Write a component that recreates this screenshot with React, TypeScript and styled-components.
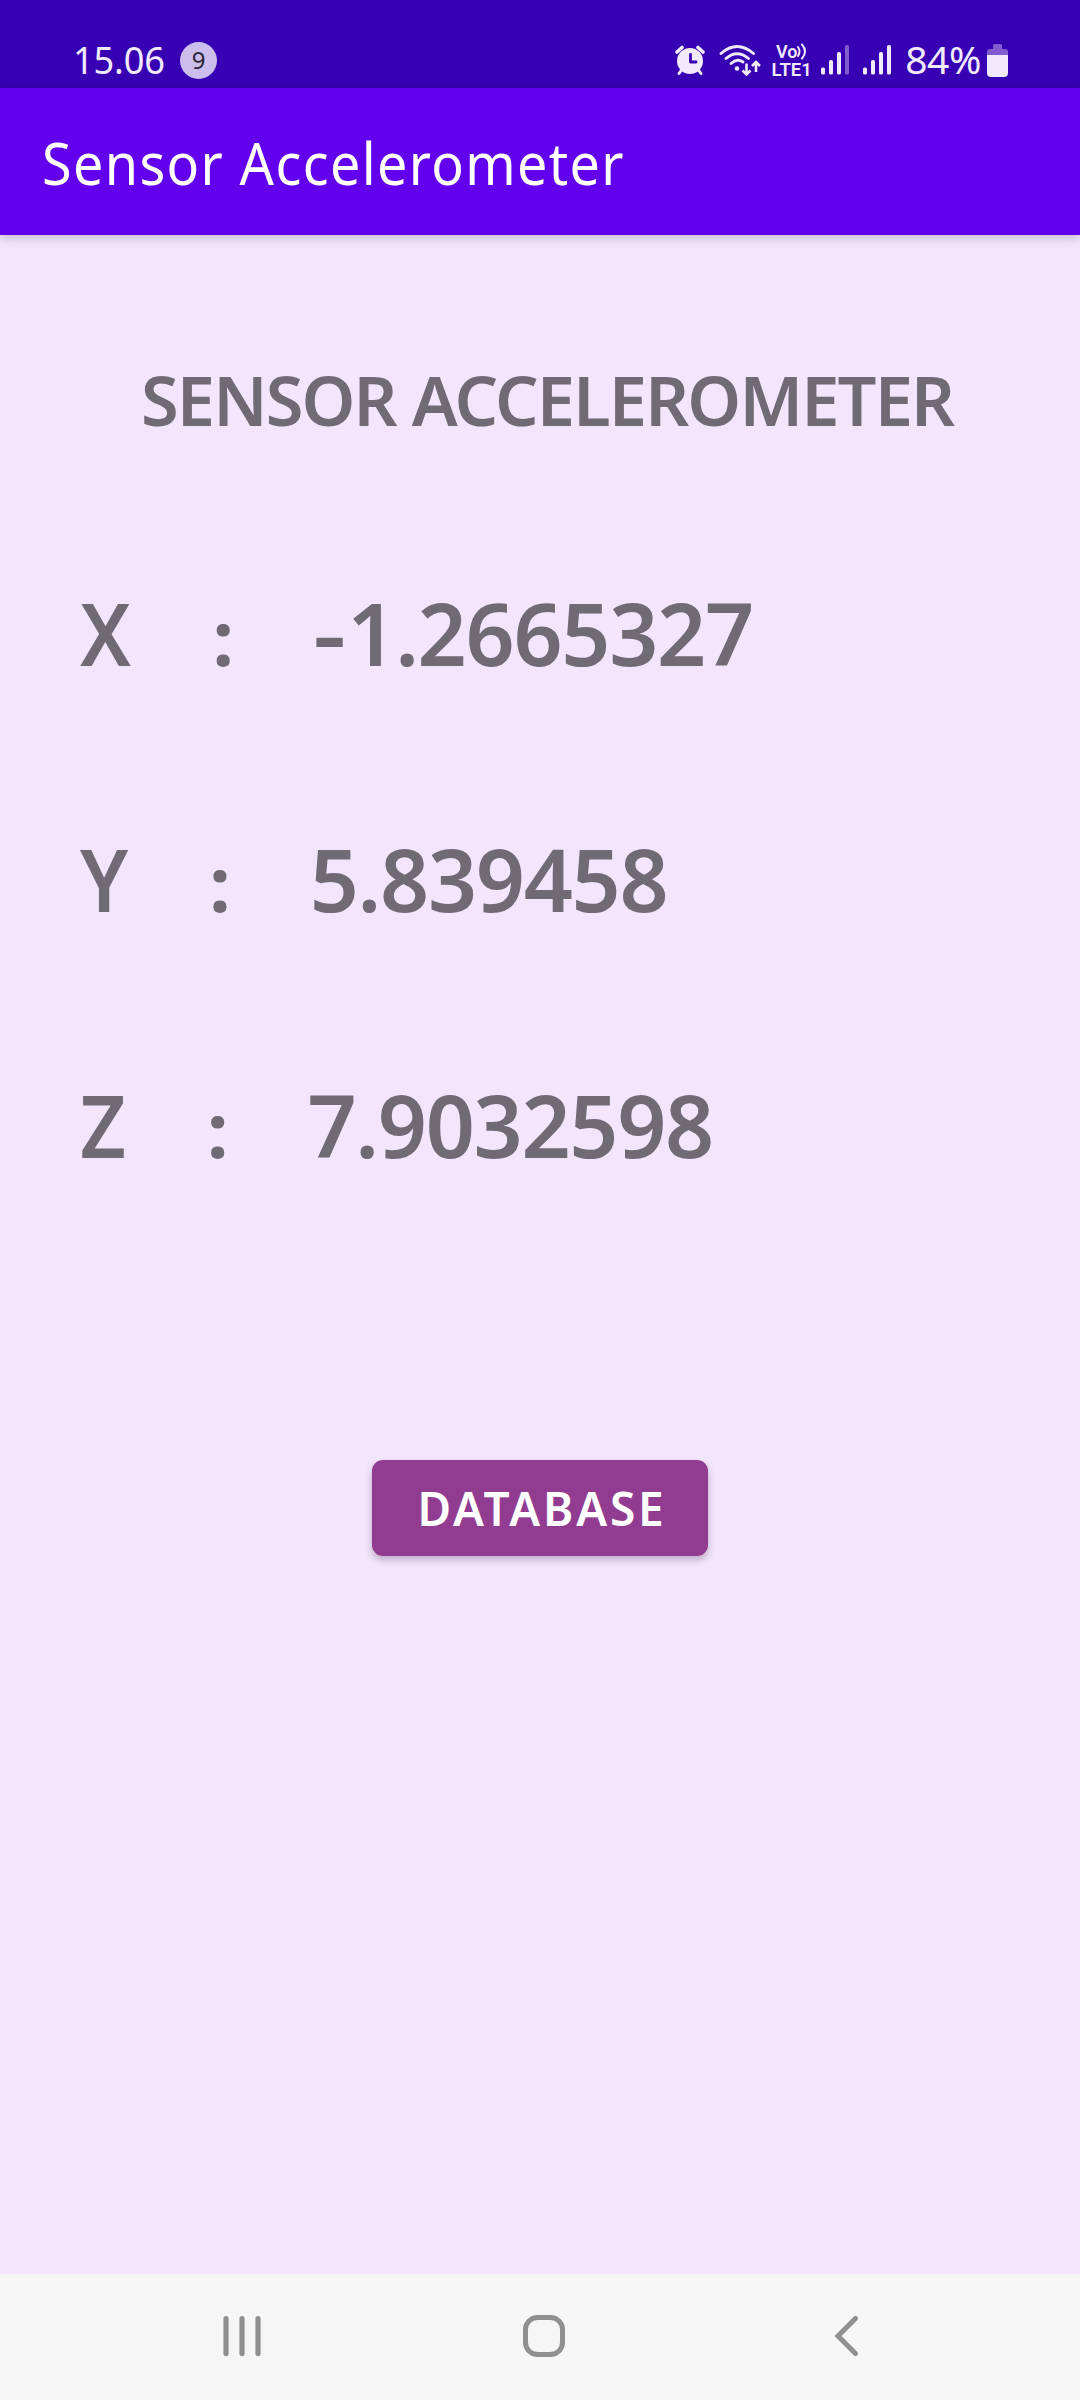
import React from "react";
import styled, { createGlobalStyle } from "styled-components";

const GlobalStyle = createGlobalStyle`
  * { box-sizing: border-box; }
  body { margin: 0; }
`;

const Screen = styled.div`
  display: flex;
  flex-direction: column;
  width: 1080px;
  height: 2400px;
  background: #f2e5fc;
  font-family: "Noto Sans", "Open Sans", sans-serif;
  overflow: hidden;
`;

const StatusBar = styled.header`
  display: flex;
  flex: none;
  justify-content: space-between;
  height: 88px;
  padding: 34px 72px 0 73px;
  background: #3700b3;
  color: #f1e9fc;
`;

const StatusGroup = styled.div`
  display: flex;
  align-items: center;
  height: 52px;
`;

const StatusText = styled.span<{ $spacing: number; $after?: number; $stretch?: number }>`
  margin-right: ${(p) => p.$after ?? 0}px;
  font-size: 39px;
  line-height: 50px;
  letter-spacing: ${(p) => p.$spacing}px;
  font-weight: 400;
  white-space: nowrap;
  transform: translateY(-1px) scaleX(${(p) => p.$stretch ?? 1});
  transform-origin: left center;
`;

const Badge = styled.span`
  display: flex;
  align-items: center;
  justify-content: center;
  width: 37px;
  height: 37px;
  margin-left: 8.5px;
  border-radius: 50%;
  background: #cbbeec;
  color: #2b2536;
  font-size: 24px;
  line-height: 36px;
`;

const Glyph = styled.svg<{ $after?: number }>`
  display: block;
  flex: none;
  margin-right: ${(p) => p.$after ?? 0}px;
`;

const Volte = styled.div`
  display: flex;
  flex-direction: column;
  align-items: center;
  width: 40px;
  height: 34px;
  margin-right: 9.5px;
  font-family: Roboto, sans-serif;
  font-weight: 600;
`;

const VolteTop = styled.div`
  display: flex;
  align-items: center;
  height: 17px;
  font-size: 18px;
  line-height: 17px;
`;

const VolteBottom = styled.div`
  height: 17px;
  font-size: 18.5px;
  line-height: 20px;
`;

const AppBar = styled.div`
  display: flex;
  flex: none;
  align-items: center;
  height: 146.5px;
  padding: 3px 0 0 42px;
  background: #6200ee;
  box-shadow: 0 3px 10px rgba(0, 0, 0, 0.18);
`;

const AppTitle = styled.h1`
  margin: 0;
  color: #fff;
  font-size: 58px;
  line-height: 80px;
  font-weight: 400;
  letter-spacing: 1.45px;
  white-space: nowrap;
  transform: scaleX(0.93);
  transform-origin: left center;
`;

const Content = styled.main`
  display: flex;
  flex: 1;
  flex-direction: column;
  padding-top: 115px;
`;

const Heading = styled.h2`
  margin: 0 0 123px;
  padding-left: 141px;
  color: #706a75;
  font-size: 68.5px;
  line-height: 100px;
  font-weight: 600;
  letter-spacing: -1.85px;
  white-space: nowrap;
`;

const Readings = styled.div`
  display: flex;
  flex-direction: column;
  gap: 126px;
`;

const Reading = styled.div`
  display: flex;
  align-items: baseline;
  height: 120px;
  padding-left: 80px;
  color: #706a75;
  font-size: 86px;
  line-height: 120px;
  font-weight: 600;
  white-space: nowrap;
`;

const Axis = styled.span`
  letter-spacing: -3px;
  transform: scaleX(0.93);
  transform-origin: left center;
`;

const Colon = styled.span`
  margin: 0 79px 0 80.5px;
  font-size: 76px;
  font-weight: 700;
`;

const Sign = styled.span`
  margin-right: 7px;
  transform: scaleX(1.2);
  transform-origin: left center;
`;

const Value = styled.span`
  letter-spacing: -1.3px;
`;

const DatabaseButton = styled.button`
  align-self: center;
  width: 336px;
  height: 96px;
  margin-top: 275px;
  padding: 0 0 0 4px;
  border: 0;
  border-radius: 11px;
  background: #923c91;
  box-shadow: 0 4px 7px rgba(60, 30, 80, 0.28);
  color: #fff;
  font-family: inherit;
  font-size: 46px;
  line-height: 92px;
  font-weight: 600;
  letter-spacing: 2.8px;
  white-space: nowrap;
`;

const NavBar = styled.nav`
  display: flex;
  flex: none;
  align-items: center;
  justify-content: space-between;
  height: 126px;
  padding: 0 212px 2px 220px;
  background: #f6f6f6;
`;

const AlarmIcon = () => (
  <Glyph width="30" height="34" viewBox="0 0 30 34" $after={14}>
    <circle cx="15" cy="18" r="13" fill="currentColor" />
    <path d="M2 9L7 4.5M28 9L23 4.5" stroke="currentColor" strokeWidth="3.6" strokeLinecap="round" />
    <path d="M6.5 27L4 30.5M23.5 27L26 30.5" stroke="currentColor" strokeWidth="3" strokeLinecap="round" />
    <path d="M15.5 11.5V19H21" fill="none" stroke="#3700b3" strokeWidth="2.8" strokeLinecap="round" strokeLinejoin="round" />
  </Glyph>
);

const WifiIcon = () => (
  <Glyph width="42" height="34" viewBox="0 0 42 34" $after={11}>
    <g fill="none" stroke="currentColor" strokeWidth="2.9" strokeLinecap="round">
      <path d="M2 10.5Q18 -3.5 34.5 10.5" />
      <path d="M7 15.5Q18 6 29.5 15.5" />
      <path d="M12 20.5Q18 15 24 19" />
    </g>
    <circle cx="18" cy="25.5" r="2.3" fill="currentColor" />
    <path d="M27.5 20.5V31M23.5 27.5L27.5 31.5L31.5 27.5M37 29V19.5M33 23L37 19L41 23" fill="none" stroke="currentColor" strokeWidth="2.6" />
  </Glyph>
);

const SignalIcon = ({ weak, after }: { weak?: boolean; after: number }) => (
  <Glyph width="28" height="30" viewBox="0 0 28 30" $after={after}>
    <g fill="currentColor">
      <rect x="0" y="22.5" width="4" height="7" rx="1.6" />
      <rect x="8" y="15" width="4" height="14.5" rx="1.6" />
      <rect x="16" y="7" width="4" height="22.5" rx="1.6" />
      <rect x="24" y="0" width="4" height="29.5" rx="1.6" opacity={weak ? 0.4 : 1} />
    </g>
  </Glyph>
);

const BatteryIcon = () => (
  <Glyph width="21" height="33" viewBox="0 0 21 33">
    <path d="M6 5V1.5Q6 0 7.5 0H13.5Q15 0 15 1.5V5H18Q21 5 21 8V11H0V8Q0 5 3 5Z" fill="currentColor" opacity="0.4" />
    <path d="M0 11H21V29Q21 33 17 33H4Q0 33 0 29Z" fill="currentColor" />
  </Glyph>
);

const readings = [
  { axis: "X", sign: "-", value: "1.2665327" },
  { axis: "Y", sign: "", value: "5.839458" },
  { axis: "Z", sign: "", value: "7.9032598" },
];

export default function App() {
  return (
    <>
      <GlobalStyle />
      <Screen>
        <StatusBar>
          <StatusGroup>
            <StatusText $spacing={-0.2} $stretch={0.93}>15.06</StatusText>
            <Badge>9</Badge>
          </StatusGroup>
          <StatusGroup>
            <AlarmIcon />
            <WifiIcon />
            <Volte>
              <VolteTop>
                Vo
                <Glyph width="10" height="17" viewBox="0 0 10 17">
                  <path d="M1 4Q4 8.5 1 13M5 1.5Q11 8.5 5 15.5" fill="none" stroke="currentColor" strokeWidth="2" strokeLinecap="round" />
                </Glyph>
              </VolteTop>
              <VolteBottom>LTE1</VolteBottom>
            </Volte>
            <SignalIcon weak after={14} />
            <SignalIcon after={14} />
            <StatusText $spacing={-0.4} $after={6}>84%</StatusText>
            <BatteryIcon />
          </StatusGroup>
        </StatusBar>
        <AppBar>
          <AppTitle>Sensor Accelerometer</AppTitle>
        </AppBar>
        <Content>
          <Heading>SENSOR ACCELEROMETER</Heading>
          <Readings>
            {readings.map((r) => (
              <Reading key={r.axis}>
                <Axis>{r.axis}</Axis>
                <Colon>:</Colon>
                {r.sign && <Sign>{r.sign}</Sign>}
                <Value>{r.value}</Value>
              </Reading>
            ))}
          </Readings>
          <DatabaseButton>DATABASE</DatabaseButton>
        </Content>
        <NavBar>
          <Glyph width="44" height="44" viewBox="0 0 44 44">
            <path d="M6 4.5V39.5M22 4.5V39.5M38 4.5V39.5" stroke="#909090" strokeWidth="5.2" strokeLinecap="round" />
          </Glyph>
          <Glyph width="44" height="44" viewBox="0 0 44 44">
            <rect x="3.5" y="3.5" width="37" height="37" rx="12" fill="none" stroke="#909090" strokeWidth="5" />
          </Glyph>
          <Glyph width="44" height="44" viewBox="0 0 44 44">
            <path d="M31.5 4.5L14 22L31.5 39.5" fill="none" stroke="#909090" strokeWidth="5" strokeLinecap="round" />
          </Glyph>
        </NavBar>
      </Screen>
    </>
  );
}
